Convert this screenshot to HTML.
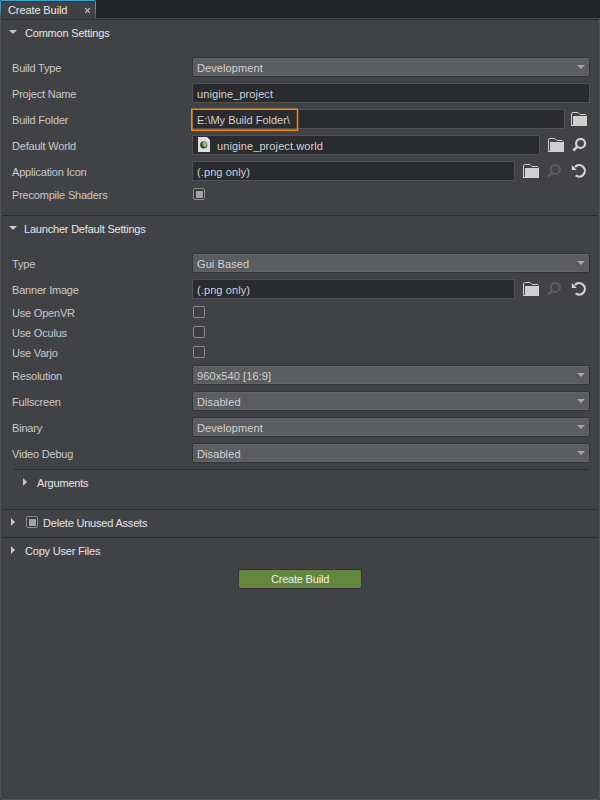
<!DOCTYPE html>
<html><head><meta charset="utf-8">
<style>
*{margin:0;padding:0;box-sizing:border-box}
html,body{width:600px;height:800px;overflow:hidden;background:#232427}
body{position:relative;font-family:"Liberation Sans",sans-serif;font-size:11px;color:#c9c9cb;letter-spacing:-0.2px}
.a{position:absolute}
.t{position:absolute;white-space:nowrap;line-height:13px}
#panel{position:absolute;left:0;top:18px;width:600px;height:782px;background:#414246;border:1px solid #505155;border-top:1px solid #4c4d51;border-radius:0 0 2px 2px}
.hl{position:absolute;height:1px;background:#2b2c2f}
.combo{position:absolute;left:193px;width:396px;height:18px;background:#5c5d61;border-radius:2px;box-shadow:0 0 0 1px #333437,inset 0 1px 0 #646569,inset 0 -1px 0 #636468}
.combo .arr{position:absolute;right:4px;top:7px;width:0;height:0;border-left:4px solid transparent;border-right:4px solid transparent;border-top:4px solid #a6a6a8}
.combo span{position:absolute;left:4px;top:4px;line-height:13px;color:#d2d2d4;letter-spacing:0.1px;white-space:nowrap}
.field{position:absolute;left:192px;height:20px;background:#2a2b2e;border:1px solid #505155}
.field span{position:absolute;left:4px;top:4px;line-height:13px;color:#d2d2d4;letter-spacing:0.1px;white-space:nowrap}
.hdr{color:#e6e6e8}
.tri-d{position:absolute;width:0;height:0;border-left:4px solid transparent;border-right:4px solid transparent;border-top:4.5px solid #c8c8ce}
.tri-r{position:absolute;width:0;height:0;border-top:4px solid transparent;border-bottom:4px solid transparent;border-left:4.5px solid #c8c8ce}
.cb{position:absolute;left:193px;width:12px;height:12px;border:1px solid #8c8c8e;border-radius:2px;background:#3d3e41}
.cb.on{background:#393a3d}.cb.on::after{content:"";position:absolute;left:2px;top:2px;width:7px;height:7px;background:#a2a2a4}
</style></head><body>
<div id="panel"></div>
<!-- tab -->
<div class="a" style="left:0;top:0;width:96px;height:19px;background:linear-gradient(#3aa3d6 0,#3aa3d6 35%,#505155 100%);border-radius:2px 2px 0 0"></div><div class="a" style="left:1px;top:1px;width:94px;height:18px;background:#404145;box-shadow:inset 1px 1px 0 #38393c"></div>
<div class="t" style="left:8px;top:4px;color:#e8e8ea;letter-spacing:-0.1px">Create Build</div>

<div class="hl" style="left:2px;top:19px;width:596px"></div>

<!-- Common Settings -->
<div class="tri-d" style="left:9px;top:30px"></div>
<div class="t hdr" style="left:25px;top:27px">Common Settings</div>

<div class="t" style="left:12px;top:62px">Build Type</div>
<div class="combo" style="top:58px"><span>Development</span><div class="arr"></div></div>

<div class="t" style="left:12px;top:88px">Project Name</div>
<div class="field" style="top:83px;width:398px"><span>unigine_project</span></div>

<div class="t" style="left:12px;top:114px">Build Folder</div>
<div class="field" style="top:109px;width:373px"><span style="letter-spacing:0">E:\My Build Folder\</span></div>

<div class="t" style="left:12px;top:140px">Default World</div>
<div class="field" style="top:135px;width:348px"><span style="left:24px">unigine_project.world</span></div>

<div class="t" style="left:12px;top:166px">Application Icon</div>
<div class="field" style="top:161px;width:323px"><span>(.png only)</span></div>

<div class="t" style="left:12px;top:189px">Precompile Shaders</div>
<div class="cb on" style="top:188px"></div>

<div class="hl" style="left:2px;top:215px;width:596px"></div>

<!-- Launcher -->
<div class="tri-d" style="left:9px;top:226px"></div>
<div class="t hdr" style="left:24px;top:223px">Launcher Default Settings</div>

<div class="t" style="left:12px;top:258px">Type</div>
<div class="combo" style="top:254px"><span>Gui Based</span><div class="arr"></div></div>

<div class="t" style="left:12px;top:284px">Banner Image</div>
<div class="field" style="top:279px;width:323px"><span>(.png only)</span></div>

<div class="t" style="left:12px;top:307px">Use OpenVR</div>
<div class="cb" style="top:306px"></div>
<div class="t" style="left:12px;top:327px">Use Oculus</div>
<div class="cb" style="top:326px"></div>
<div class="t" style="left:12px;top:347px">Use Varjo</div>
<div class="cb" style="top:346px"></div>

<div class="t" style="left:12px;top:370px">Resolution</div>
<div class="combo" style="top:366px"><span>960x540 [16:9]</span><div class="arr"></div></div>
<div class="t" style="left:12px;top:396px">Fullscreen</div>
<div class="combo" style="top:392px"><span>Disabled</span><div class="arr"></div></div>
<div class="t" style="left:12px;top:422px">Binary</div>
<div class="combo" style="top:418px"><span>Development</span><div class="arr"></div></div>
<div class="t" style="left:12px;top:448px">Video Debug</div>
<div class="combo" style="top:444px"><span>Disabled</span><div class="arr"></div></div>

<div class="hl" style="left:14px;top:469px;width:575px"></div>
<div class="tri-r" style="left:23px;top:478px"></div>
<div class="t hdr" style="left:37px;top:477px">Arguments</div>

<div class="hl" style="left:2px;top:509px;width:596px"></div>
<div class="tri-r" style="left:11px;top:518px"></div>
<div class="cb on" style="left:26px;top:516px"></div>
<div class="t hdr" style="left:43px;top:517px">Delete Unused Assets</div>

<div class="hl" style="left:2px;top:537px;width:596px"></div>
<div class="tri-r" style="left:11px;top:546px"></div>
<div class="t hdr" style="left:25px;top:545px">Copy User Files</div>

<div class="a" style="left:239px;top:570px;width:122px;height:18px;background:#64863e;border-radius:2px;box-shadow:0 0 0 1px #353639"></div>
<div class="t" style="left:239px;top:573px;width:122px;text-align:center;color:#f0f0f0">Create Build</div>
<svg class="a" style="left:0;top:0" width="600" height="800" viewBox="0 0 600 800">
<line x1="85.2" y1="8.2" x2="89.8" y2="12.8" stroke="#cfcfd2" stroke-width="1.1"/><line x1="89.8" y1="8.2" x2="85.2" y2="12.8" stroke="#cfcfd2" stroke-width="1.1"/>
<g transform="translate(571,112)"><path d="M0.5,14 V1.8 Q0.5,0.5 1.8,0.5 H7 L9,2.5 H14.5 L15.5,3.5" fill="none" stroke="#cfcfcf" stroke-width="1"/><rect x="2" y="4" width="14" height="10" fill="#cfcfcf"/><rect x="0" y="13" width="16" height="1" fill="#cfcfcf"/></g>
<g transform="translate(548,138)"><path d="M0.5,14 V1.8 Q0.5,0.5 1.8,0.5 H7 L9,2.5 H14.5 L15.5,3.5" fill="none" stroke="#cfcfcf" stroke-width="1"/><rect x="2" y="4" width="14" height="10" fill="#cfcfcf"/><rect x="0" y="13" width="16" height="1" fill="#cfcfcf"/></g>
<circle cx="580.6" cy="143.4" r="4.45" fill="none" stroke="#d4d4d4" stroke-width="2.2"/><line x1="573.3000000000001" y1="150.5" x2="577.3000000000001" y2="146.6" stroke="#d4d4d4" stroke-width="2.5"/>
<g transform="translate(523,164)"><path d="M0.5,14 V1.8 Q0.5,0.5 1.8,0.5 H7 L9,2.5 H14.5 L15.5,3.5" fill="none" stroke="#cfcfcf" stroke-width="1"/><rect x="2" y="4" width="14" height="10" fill="#cfcfcf"/><rect x="0" y="13" width="16" height="1" fill="#cfcfcf"/></g>
<circle cx="555.4" cy="169.4" r="4.45" fill="none" stroke="#5c5d60" stroke-width="2.2"/><line x1="548.1" y1="176.5" x2="552.1" y2="172.6" stroke="#5c5d60" stroke-width="2.5"/>
<path d="M575.00,166.94 A5.7,5.7 0 1 1 575.67,175.45" fill="none" stroke="#d4d4d4" stroke-width="2.2"/><polygon points="571.80,165.00 571.80,170.00 576.80,170.00" fill="#d4d4d4"/>
<g transform="translate(523,282)"><path d="M0.5,14 V1.8 Q0.5,0.5 1.8,0.5 H7 L9,2.5 H14.5 L15.5,3.5" fill="none" stroke="#cfcfcf" stroke-width="1"/><rect x="2" y="4" width="14" height="10" fill="#cfcfcf"/><rect x="0" y="13" width="16" height="1" fill="#cfcfcf"/></g>
<circle cx="555.4" cy="287.4" r="4.45" fill="none" stroke="#5c5d60" stroke-width="2.2"/><line x1="548.1" y1="294.5" x2="552.1" y2="290.59999999999997" stroke="#5c5d60" stroke-width="2.5"/>
<path d="M575.00,284.94 A5.7,5.7 0 1 1 575.67,293.45" fill="none" stroke="#d4d4d4" stroke-width="2.2"/><polygon points="571.80,283.00 571.80,288.00 576.80,288.00" fill="#d4d4d4"/>
<path d="M198,137 H206.7 L210,140.3 V152 H198 Z" fill="#dedede"/><path d="M206.7,137 L210,140.3 H206.7 Z" fill="#f4f4f4"/><circle cx="203.7" cy="144.9" r="3.6" fill="#3e3f44"/><path d="M203.0,141.7 Q205.6,141.2 206.9,143.3 Q207.2,145.0 205.9,146.0 L205.2,147.5 Q204.2,147.8 203.8,146.5 Q203.6,145.5 202.7,145.0 Q202.1,143.6 203.0,141.7 Z" fill="#88c860"/><path d="M200.2,145.9 Q201.3,146.2 201.4,147.6 Q200.5,147.3 200.2,145.9 Z" fill="#7fc455"/>
<rect x="191.75" y="109.25" width="105.75" height="21" fill="none" stroke="#fb8a0a" stroke-width="1.5"/>
</svg>
</body></html>
